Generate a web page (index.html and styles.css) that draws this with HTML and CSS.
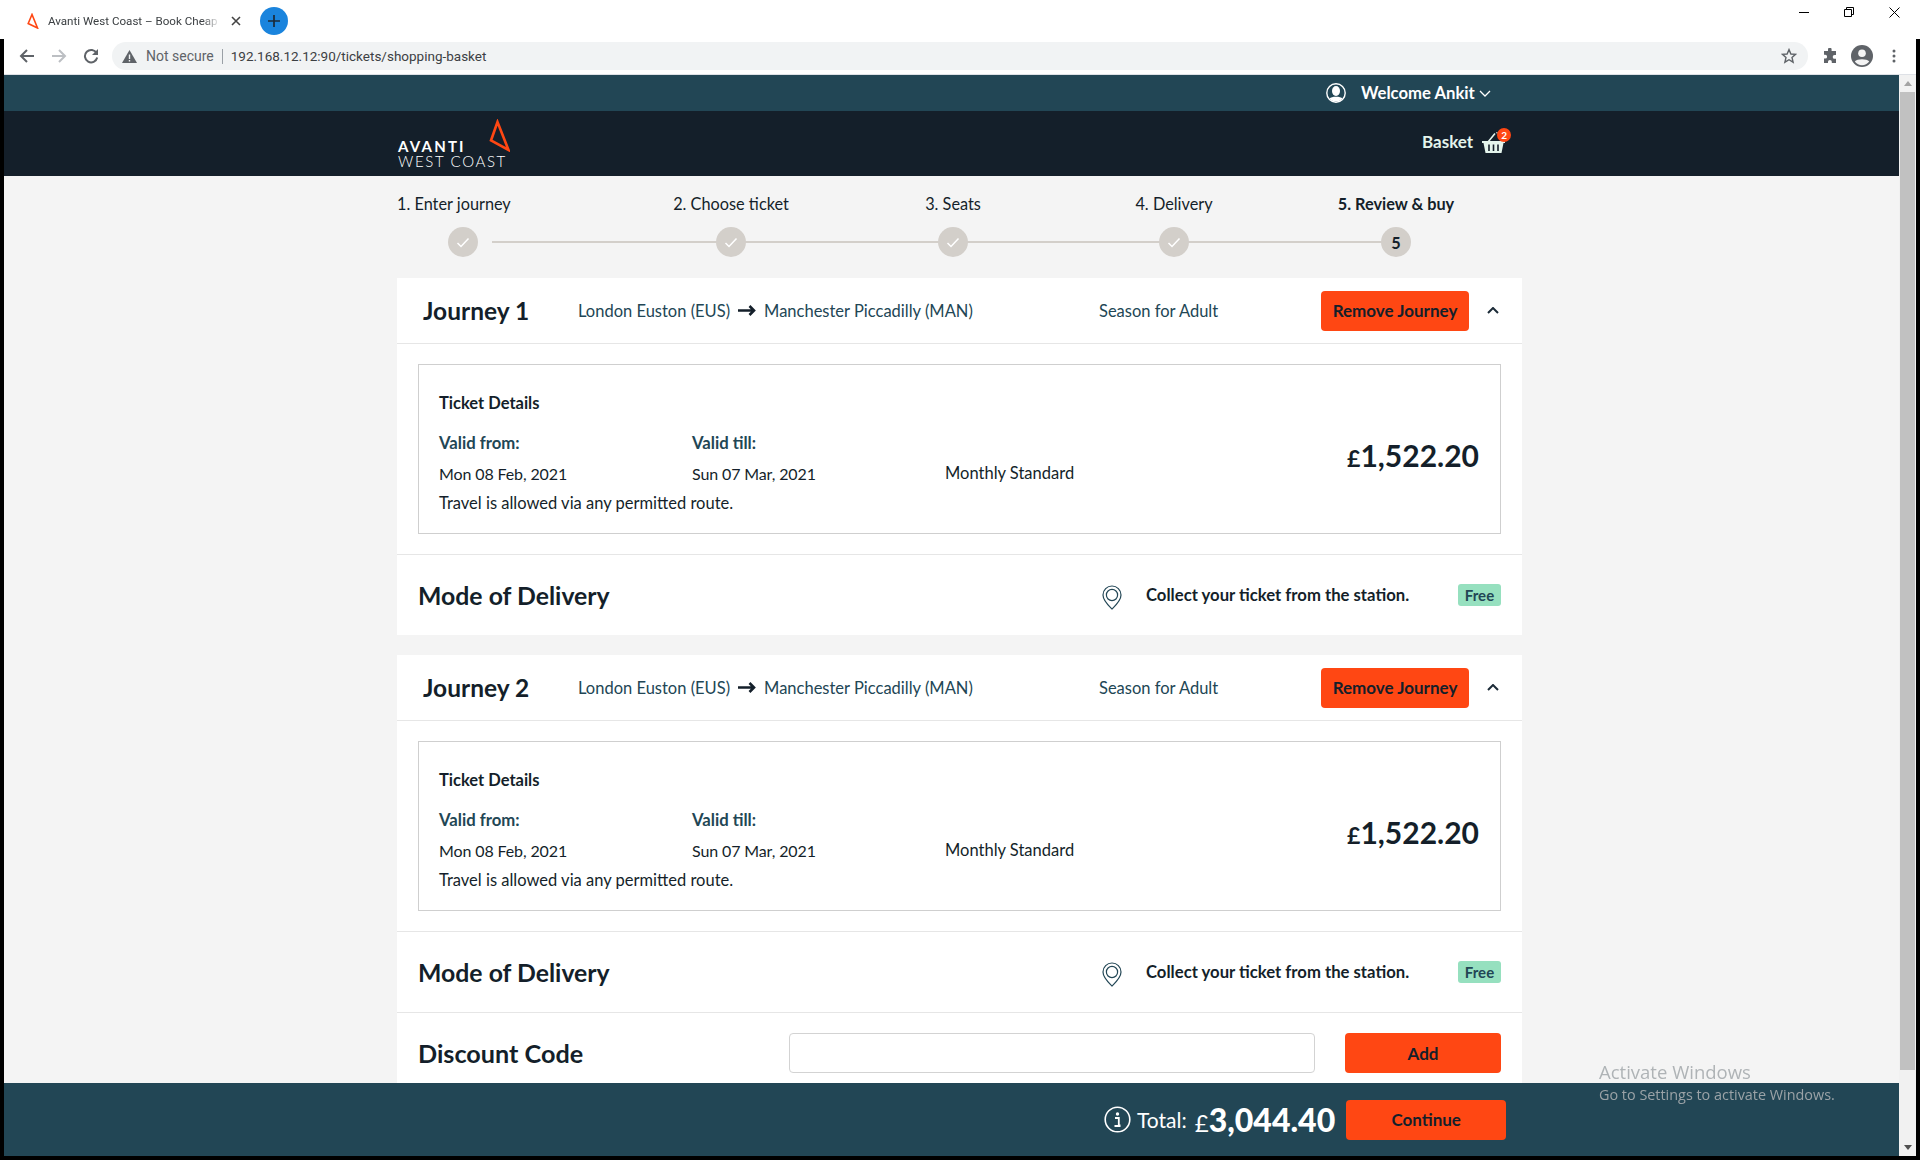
FILE: index.html
```html
<!DOCTYPE html>
<html lang="en">
<head>
  <meta charset="UTF-8">
  <title>Avanti West Coast – Book Cheap Train Tickets</title>
  <link rel="stylesheet" href="styles.css">
</head>
<body>

<!-- browser tab strip -->
<div class="tabstrip">
  <div class="tab">
    <svg class="tab-icon" width="12" height="16" viewBox="0 0 12 16"><path d="M5 1.5 L1.2 10.5 L10.5 15 Z" fill="none" stroke="#ff4713" stroke-width="1.6"/></svg>
    <span class="tab-title">Avanti West Coast – Book Cheap</span>
    <svg class="tab-close" width="10" height="10" viewBox="0 0 10 10"><path d="M1 1 L9 9 M9 1 L1 9" stroke="#444" stroke-width="1.6"/></svg>
  </div>
  <div class="new-tab">
    <svg width="12" height="12" viewBox="0 0 12 12"><path d="M6 0 V12 M0 6 H12" stroke="#1b2a38" stroke-width="1.7"/></svg>
  </div>
  <div class="win-controls">
    <svg width="10" height="10" viewBox="0 0 10 10"><path d="M0 5.5 H10" stroke="#000"/></svg>
    <svg width="10" height="10" viewBox="0 0 10 10"><path d="M0.5 2.5 H7.5 V9.5 H0.5 Z M2.5 2.5 V0.5 H9.5 V7.5 H7.5" fill="none" stroke="#000"/></svg>
    <svg width="11" height="11" viewBox="0 0 11 11"><path d="M0.5 0.5 L10.5 10.5 M10.5 0.5 L0.5 10.5" stroke="#000"/></svg>
  </div>
</div>

<div class="window">
  <!-- browser toolbar -->
  <div class="toolbar">
    <svg class="nav-icon" width="16" height="16" viewBox="0 0 16 16"><path d="M15 8 H2 M8 2 L2 8 L8 14" fill="none" stroke="#5f6368" stroke-width="2"/></svg>
    <svg class="nav-icon" width="16" height="16" viewBox="0 0 16 16"><path d="M1 8 H14 M8 2 L14 8 L8 14" fill="none" stroke="#bcbfc3" stroke-width="2"/></svg>
    <svg class="nav-icon" width="16" height="16" viewBox="0 0 16 16"><path d="M13.6 5.2 A6.2 6.2 0 1 0 14.2 9.5" fill="none" stroke="#5f6368" stroke-width="2"/><path d="M15 1 V7 H9 Z" fill="#5f6368"/></svg>
    <div class="omnibox">
      <svg width="15" height="13" viewBox="0 0 15 13"><path d="M7.5 0 L15 13 H0 Z" fill="#5f6368"/><path d="M7.5 4.5 V9 M7.5 10 V11.5" stroke="#f1f3f4" stroke-width="1.4"/></svg>
      <span class="not-secure">Not secure</span>
      <span class="omni-divider"></span>
      <span class="url">192.168.12.12:90/tickets/shopping-basket</span>
      <svg class="star" width="16" height="16" viewBox="0 0 16 16"><path d="M8 1.6 L9.9 6 L14.6 6.4 L11 9.5 L12.1 14.2 L8 11.7 L3.9 14.2 L5 9.5 L1.4 6.4 L6.1 6 Z" fill="none" stroke="#5f6368" stroke-width="1.4"/></svg>
    </div>
    <svg class="puzzle" width="16" height="16" viewBox="0 0 16 16"><path d="M6 1.5 a1.8 1.8 0 0 1 3.6 0 V3 H14 V7 H12.6 a1.9 1.9 0 0 0 0 3.8 H14 V15 H9.8 V13.8 a1.9 1.9 0 0 0 -3.8 0 V15 H2 V10.6 H3.2 a1.9 1.9 0 0 0 0 -3.8 H2 V3 H6 Z" fill="#5f6368"/></svg>
    <svg class="avatar" width="22" height="22" viewBox="0 0 22 22"><circle cx="11" cy="11" r="11" fill="#5f6368"/><circle cx="11" cy="8.2" r="3.8" fill="#f4f4f4"/><path d="M3.8 16.6 C6 13.4 16 13.4 18.2 16.6 A9 9 0 0 1 3.8 16.6 Z" fill="#f4f4f4"/></svg>
    <svg class="dots" width="4" height="14" viewBox="0 0 4 14"><circle cx="2" cy="2" r="1.5" fill="#5f6368"/><circle cx="2" cy="7" r="1.5" fill="#5f6368"/><circle cx="2" cy="12" r="1.5" fill="#5f6368"/></svg>
  </div>

  <div class="viewport">
    <div class="page">
      <div class="topbar">
        <svg class="user-icon" width="20" height="20" viewBox="0 0 20 20"><circle cx="10" cy="10" r="9.2" fill="none" stroke="#fff" stroke-width="1.4"/><ellipse cx="10" cy="8" rx="4" ry="5" fill="#fff"/><path d="M3.6 15.6 C5 13 15 13 16.4 15.6 C14 19.6 6 19.6 3.6 15.6 Z" fill="#fff"/></svg>
        <span class="welcome">Welcome Ankit</span>
        <svg width="12" height="7" viewBox="0 0 12 7"><path d="M1 1 L6 6 L11 1" fill="none" stroke="#fff" stroke-width="1.3"/></svg>
      </div>

      <header class="mainbar">
        <div class="logo">
          <div class="logo-top">
            <span class="logo-avanti">AVANTI</span>
            <svg width="22" height="33" viewBox="0 0 22 33"><path d="M9.5 3 L3 21.5 L20.5 31 Z" fill="none" stroke="#ff4713" stroke-width="2.6"/></svg>
          </div>
          <div class="logo-west">WEST COAST</div>
        </div>
        <div class="basket">
          <span>Basket</span>
          <span class="basket-icon">
            <svg width="24" height="22" viewBox="0 0 24 22"><path d="M6 10 L13 1.5 M14.5 1 L15.5 0.5" fill="none" stroke="#e4f4ec" stroke-width="1.6"/><path d="M0 9 H23 V11 H21.5 L19.5 21 H3.5 L1.5 11 H0 Z" fill="#e4f4ec"/><path d="M7 12.5 V19 M11.5 12.5 V19 M16 12.5 V19" stroke="#141f2a" stroke-width="1.6"/></svg>
            <span class="basket-badge">2</span>
          </span>
        </div>
      </header>

      <div class="scroll-area">
        <div class="stepper">
          <div class="step step-first">
            <span class="step-label">1. Enter journey</span>
            <span class="step-dot"><svg width="14" height="11" viewBox="0 0 14 11"><path d="M1.5 6 L5 9.5 L12.5 1.5" fill="none" stroke="#fff" stroke-width="1.5"/></svg></span>
          </div>
          <div class="step">
            <span class="step-label">2. Choose ticket</span>
            <span class="step-dot"><svg width="14" height="11" viewBox="0 0 14 11"><path d="M1.5 6 L5 9.5 L12.5 1.5" fill="none" stroke="#fff" stroke-width="1.5"/></svg></span>
          </div>
          <div class="step">
            <span class="step-label">3. Seats</span>
            <span class="step-dot"><svg width="14" height="11" viewBox="0 0 14 11"><path d="M1.5 6 L5 9.5 L12.5 1.5" fill="none" stroke="#fff" stroke-width="1.5"/></svg></span>
          </div>
          <div class="step">
            <span class="step-label">4. Delivery</span>
            <span class="step-dot"><svg width="14" height="11" viewBox="0 0 14 11"><path d="M1.5 6 L5 9.5 L12.5 1.5" fill="none" stroke="#fff" stroke-width="1.5"/></svg></span>
          </div>
          <div class="step step-current">
            <span class="step-label">5. Review &amp; buy</span>
            <span class="step-dot">5</span>
          </div>
        </div>

        <section class="card card-spaced">
          <div class="journey-head">
            <h2 class="journey-title">Journey 1</h2>
            <div class="route">
              <span>London Euston (EUS)</span>
              <svg width="18" height="11" viewBox="0 0 18 11"><path d="M0 5.5 H16 M11.5 1 L16 5.5 L11.5 10" fill="none" stroke="#141f2a" stroke-width="2.6"/></svg>
              <span>Manchester Piccadilly (MAN)</span>
            </div>
            <span class="season">Season for Adult</span>
            <button class="btn btn-remove">Remove Journey</button>
            <svg class="collapse" width="12" height="7" viewBox="0 0 12 7"><path d="M1 6 L6 1 L11 6" fill="none" stroke="#1c2b38" stroke-width="2"/></svg>
          </div>
          <div class="ticket-wrap">
            <div class="ticket">
              <div class="ticket-info">
                <div class="ticket-heading">Ticket Details</div>
                <div class="ticket-grid">
                  <span class="ticket-label">Valid from:</span>
                  <span class="ticket-label">Valid till:</span>
                  <span></span>
                  <span class="ticket-date">Mon 08 Feb, 2021</span>
                  <span class="ticket-date">Sun 07 Mar, 2021</span>
                  <span>Monthly Standard</span>
                </div>
                <div class="ticket-note">Travel is allowed via any permitted route.</div>
              </div>
              <div class="price"><span class="pound">£</span>1,522.20</div>
            </div>
          </div>
          <div class="delivery">
            <h2 class="section-title">Mode of Delivery</h2>
            <svg class="pin" width="20" height="25" viewBox="0 0 20 25"><path d="M10 24 C6 20 1 15.5 1 10 A9 9 0 0 1 19 10 C19 15.5 14 20 10 24 Z" fill="none" stroke="#224655" stroke-width="1.2"/><circle cx="10" cy="10" r="5.6" fill="none" stroke="#224655" stroke-width="1.2"/></svg>
            <span class="collect">Collect your ticket from the station.</span>
            <span class="free">Free</span>
          </div>
        </section>

        <section class="card">
          <div class="journey-head">
            <h2 class="journey-title">Journey 2</h2>
            <div class="route">
              <span>London Euston (EUS)</span>
              <svg width="18" height="11" viewBox="0 0 18 11"><path d="M0 5.5 H16 M11.5 1 L16 5.5 L11.5 10" fill="none" stroke="#141f2a" stroke-width="2.6"/></svg>
              <span>Manchester Piccadilly (MAN)</span>
            </div>
            <span class="season">Season for Adult</span>
            <button class="btn btn-remove">Remove Journey</button>
            <svg class="collapse" width="12" height="7" viewBox="0 0 12 7"><path d="M1 6 L6 1 L11 6" fill="none" stroke="#1c2b38" stroke-width="2"/></svg>
          </div>
          <div class="ticket-wrap">
            <div class="ticket">
              <div class="ticket-info">
                <div class="ticket-heading">Ticket Details</div>
                <div class="ticket-grid">
                  <span class="ticket-label">Valid from:</span>
                  <span class="ticket-label">Valid till:</span>
                  <span></span>
                  <span class="ticket-date">Mon 08 Feb, 2021</span>
                  <span class="ticket-date">Sun 07 Mar, 2021</span>
                  <span>Monthly Standard</span>
                </div>
                <div class="ticket-note">Travel is allowed via any permitted route.</div>
              </div>
              <div class="price"><span class="pound">£</span>1,522.20</div>
            </div>
          </div>
          <div class="delivery">
            <h2 class="section-title">Mode of Delivery</h2>
            <svg class="pin" width="20" height="25" viewBox="0 0 20 25"><path d="M10 24 C6 20 1 15.5 1 10 A9 9 0 0 1 19 10 C19 15.5 14 20 10 24 Z" fill="none" stroke="#224655" stroke-width="1.2"/><circle cx="10" cy="10" r="5.6" fill="none" stroke="#224655" stroke-width="1.2"/></svg>
            <span class="collect">Collect your ticket from the station.</span>
            <span class="free">Free</span>
          </div>
          <div class="discount">
            <h2 class="section-title">Discount Code</h2>
            <input class="discount-input" type="text">
            <button class="btn btn-add">Add</button>
          </div>
        </section>
      </div>

      <footer class="totalbar">
        <svg width="27" height="27" viewBox="0 0 27 27"><circle cx="13.5" cy="13.5" r="12.3" fill="none" stroke="#fff" stroke-width="1.6"/><circle cx="13.5" cy="8" r="1.7" fill="#fff"/><path d="M11 12 H14.8 V19.5 H16.5 M10.5 20 H16.5" fill="none" stroke="#fff" stroke-width="1.8"/></svg>
        <span class="total-label">Total:</span>
        <span class="total-amount"><span class="total-pound">£</span>3,044.40</span>
        <button class="btn btn-continue">Continue</button>
      </footer>

      <div class="activate">
        <div class="activate-title">Activate Windows</div>
        <div class="activate-sub">Go to Settings to activate Windows.</div>
      </div>
    </div>

    <div class="scrollbar">
      <span class="arrow-up"></span>
      <span class="thumb"></span>
      <span class="arrow-down"></span>
    </div>
  </div>
</div>

</body>
</html>
```

FILE: styles.css
```css
* {
  box-sizing: border-box;
}
body {
  margin: 0;
  height: 1160px;
  overflow: hidden;
  display: flex;
  flex-direction: column;
  background: #fff;
  font-family: Lato, "Liberation Sans", sans-serif;
  font-size: 16.5px;
  color: #141f2a;
}
h2 {
  margin: 0;
  font-weight: 700;
}

/* browser chrome */
.tabstrip {
  height: 39px;
  flex: none;
  display: flex;
  align-items: flex-start;
  padding-left: 27px;
  background: #fff;
  font-family: Roboto, sans-serif;
}
.tab {
  width: 217px;
  height: 42px;
  display: flex;
  align-items: center;
}
.tab-icon {
  flex: none;
  margin-right: 9px;
}
.tab-title {
  width: 172px;
  white-space: nowrap;
  font-size: 11.6px;
  color: #3c4043;
  -webkit-mask-image: linear-gradient(to right, #000 90%, #fff0);
  mask-image: linear-gradient(to right, #000 90%, #fff0);
}
.tab-close {
  flex: none;
  margin-left: 11px;
}
.new-tab {
  width: 28px;
  height: 28px;
  margin: 7px 0 0 16px;
  border-radius: 50%;
  background: #1a84dd;
  display: flex;
  align-items: center;
  justify-content: center;
}
.win-controls {
  margin-left: auto;
  width: 121px;
  padding: 7px 20px 0 0;
  display: flex;
  justify-content: space-between;
}
.window {
  flex: 1;
  min-height: 0;
  display: flex;
  flex-direction: column;
  border-left: 4px solid #000;
  border-right: 4px solid #000;
  border-bottom: 4px solid #000;
}
.toolbar {
  height: 36px;
  flex: none;
  display: flex;
  align-items: center;
  padding: 0 0 1px 15px;
  background: #fff;
  border-bottom: 1px solid #dee1e6;
}
.nav-icon {
  flex: none;
  margin-right: 16px;
}
.omnibox {
  width: 1696px;
  height: 28px;
  margin: 0 0 0 -3px;
  padding: 0 11px 0 10px;
  flex: none;
  display: flex;
  align-items: center;
  border-radius: 14px;
  background: #f1f3f4;
  font-family: Roboto, sans-serif;
  font-size: 13.5px;
}
.not-secure {
  margin-left: 9px;
  font-size: 14px;
  color: #5f6368;
}
.omni-divider {
  width: 1px;
  height: 15px;
  margin: 0 8px;
  background: #9aa0a6;
}
.url {
  color: #3c4043;
}
.star {
  margin-left: auto;
}
.puzzle {
  margin-left: 14px;
  flex: none;
}
.avatar {
  margin-left: 13px;
  flex: none;
}
.dots {
  margin-left: 19px;
  flex: none;
}

/* page frame */
.viewport {
  flex: 1;
  min-height: 0;
  display: flex;
}
.page {
  flex: 1;
  min-width: 0;
  display: flex;
  flex-direction: column;
  position: relative;
  background: #f4f4f4;
}
.scrollbar {
  width: 17px;
  flex: none;
  display: flex;
  flex-direction: column;
  align-items: center;
  background: #f1f1f1;
}
.arrow-up {
  margin: 6px 0 6px;
  border-left: 4px solid transparent;
  border-right: 4px solid transparent;
  border-bottom: 5px solid #a3a3a3;
}
.thumb {
  width: 15px;
  flex: 1;
  margin-bottom: 75px;
  background: #c1c1c1;
}
.arrow-down {
  margin-bottom: 6px;
  border-left: 4px solid transparent;
  border-right: 4px solid transparent;
  border-top: 5px solid #505050;
}

/* site header */
.topbar {
  height: 36px;
  flex: none;
  display: flex;
  align-items: center;
  padding-left: 1322px;
  background: #224655;
  color: #fff;
}
.user-icon {
  flex: none;
  margin-right: 15px;
}
.welcome {
  font-weight: 700;
  font-size: 16.7px;
  margin-right: 4px;
}
.mainbar {
  height: 65px;
  flex: none;
  display: flex;
  background: #141f2a;
  color: #e4f4ec;
  padding-left: 394px;
}
.logo {
  width: 112px;
  margin-top: 8px;
  color: #fff;
}
.logo-top {
  display: flex;
  justify-content: space-between;
  align-items: flex-end;
}
.logo-avanti {
  font-weight: 700;
  font-size: 15px;
  line-height: 12px;
  letter-spacing: 2.2px;
}
.logo-west {
  margin-top: 3px;
  font-weight: 300;
  font-size: 15px;
  line-height: 13px;
  letter-spacing: 1.65px;
  white-space: nowrap;
}
.basket {
  margin-left: 912px;
  display: flex;
  align-items: center;
  height: 60px;
  font-weight: 700;
  font-size: 17px;
}
.basket-icon {
  display: block;
  position: relative;
  height: 22px;
  margin-left: 9px;
  margin-top: 4px;
}
.basket-badge {
  position: absolute;
  top: -4px;
  right: -5px;
  width: 14px;
  height: 14px;
  border-radius: 50%;
  background: #ff4713;
  color: #fff;
  font-size: 10px;
  line-height: 14px;
  text-align: center;
}

/* checkout steps */
.scroll-area {
  flex: 1;
  min-height: 0;
  overflow: hidden;
}
.stepper {
  width: 1067px;
  height: 102px;
  margin-left: 392px;
  padding-top: 16px;
  display: grid;
  grid-template-columns: 268px 222px 221px 222px 134px;
  position: relative;
  font-size: 16.3px;
}
.stepper::before {
  content: "";
  position: absolute;
  left: 96px;
  right: 67px;
  top: 65px;
  height: 2px;
  background: #d3cfca;
}
.step {
  width: 134px;
  display: flex;
  flex-direction: column;
  align-items: center;
  position: relative;
}
.step-label {
  height: 24px;
  line-height: 24px;
  white-space: nowrap;
}
.step-first .step-label {
  align-self: flex-start;
  margin-left: 1px;
}
.step-current .step-label {
  font-weight: 700;
}
.step-dot {
  width: 30px;
  height: 30px;
  margin-top: 11px;
  border-radius: 50%;
  background: #d3cfca;
  display: flex;
  align-items: center;
  justify-content: center;
  font-weight: 700;
}

/* journey cards */
.card {
  width: 1125px;
  margin-left: 393px;
  background: #fff;
}
.card-spaced {
  margin-bottom: 20px;
}
.journey-head {
  height: 66px;
  display: flex;
  align-items: center;
  padding: 0 23px 0 26px;
  border-bottom: 1px solid #e6e6e6;
}
.journey-title {
  width: 155px;
  font-size: 24.5px;
}
.route {
  width: 521px;
  display: flex;
  align-items: center;
  gap: 8px;
  color: #224655;
}
.season {
  width: 222px;
  color: #224655;
}
.btn {
  border: none;
  border-radius: 4px;
  background: #ff4713;
  color: #141f2a;
  font-family: inherit;
  font-weight: 700;
  font-size: 17px;
}
.btn-remove {
  width: 148px;
  height: 40px;
  padding: 0;
}
.collapse {
  margin-left: 18px;
  margin-top: -1px;
}
.ticket-wrap {
  padding: 20px 21px;
  border-bottom: 1px solid #e6e6e6;
}
.ticket {
  height: 170px;
  display: flex;
  align-items: center;
  justify-content: space-between;
  padding: 0 21px 0 20px;
  border: 1px solid #cfcfcf;
}
.ticket-info {
  margin-top: 11px;
}
.ticket-heading {
  font-weight: 700;
  margin-bottom: 13px;
  line-height: 24px;
}
.ticket-grid {
  display: grid;
  grid-template-columns: 253px 253px 200px;
  grid-auto-rows: 30px;
  align-items: center;
}
.ticket-label {
  font-weight: 700;
  font-size: 16.7px;
  color: #224655;
}
.ticket-date {
  font-size: 16px;
  letter-spacing: -0.12px;
}
.ticket-note {
  line-height: 30px;
}
.price {
  font-size: 30px;
  font-weight: 700;
  margin-top: 12px;
}
.pound {
  font-size: 23px;
}
.delivery {
  height: 80px;
  display: flex;
  align-items: center;
  padding: 0 21px;
}
.section-title {
  font-size: 24.8px;
}
.pin {
  margin-left: auto;
  margin-top: 5px;
}
.collect {
  width: 312px;
  margin-left: 24px;
  font-weight: 700;
  font-size: 16.7px;
}
.free {
  width: 43px;
  height: 22px;
  border-radius: 3px;
  background: #96e0bf;
  color: #224655;
  font-weight: 700;
  font-size: 15px;
  line-height: 22px;
  text-align: center;
}
.discount {
  display: flex;
  padding: 20px 21px;
  align-items: center;
  border-top: 1px solid #e6e6e6;
}
.discount .section-title {
  width: 371px;
  font-size: 25.2px;
}
.discount-input {
  width: 526px;
  height: 40px;
  margin-right: 30px;
  border: 1px solid #d3d3d3;
  border-radius: 4px;
  background: #fff;
}
.btn-add {
  width: 156px;
  height: 40px;
}

/* sticky total */
.totalbar {
  height: 73px;
  flex: none;
  display: flex;
  align-items: center;
  padding-left: 1100px;
  background: #224655;
  color: #fff;
}
.total-label {
  margin-left: 6px;
  font-size: 21px;
}
.total-amount {
  margin-left: 8px;
  font-size: 32px;
  font-weight: 900;
}
.total-pound {
  font-size: 24px;
  font-weight: 400;
}
.btn-continue {
  width: 160px;
  height: 40px;
  margin-left: 11px;
}
.activate {
  position: absolute;
  left: 1595px;
  bottom: 51px;
  font-family: "Open Sans", sans-serif;
  color: #a8adb0;
  opacity: 0.9;
}
.activate-title {
  font-size: 18.5px;
  line-height: 26px;
}
.activate-sub {
  font-size: 14.4px;
  line-height: 20px;
}
```
